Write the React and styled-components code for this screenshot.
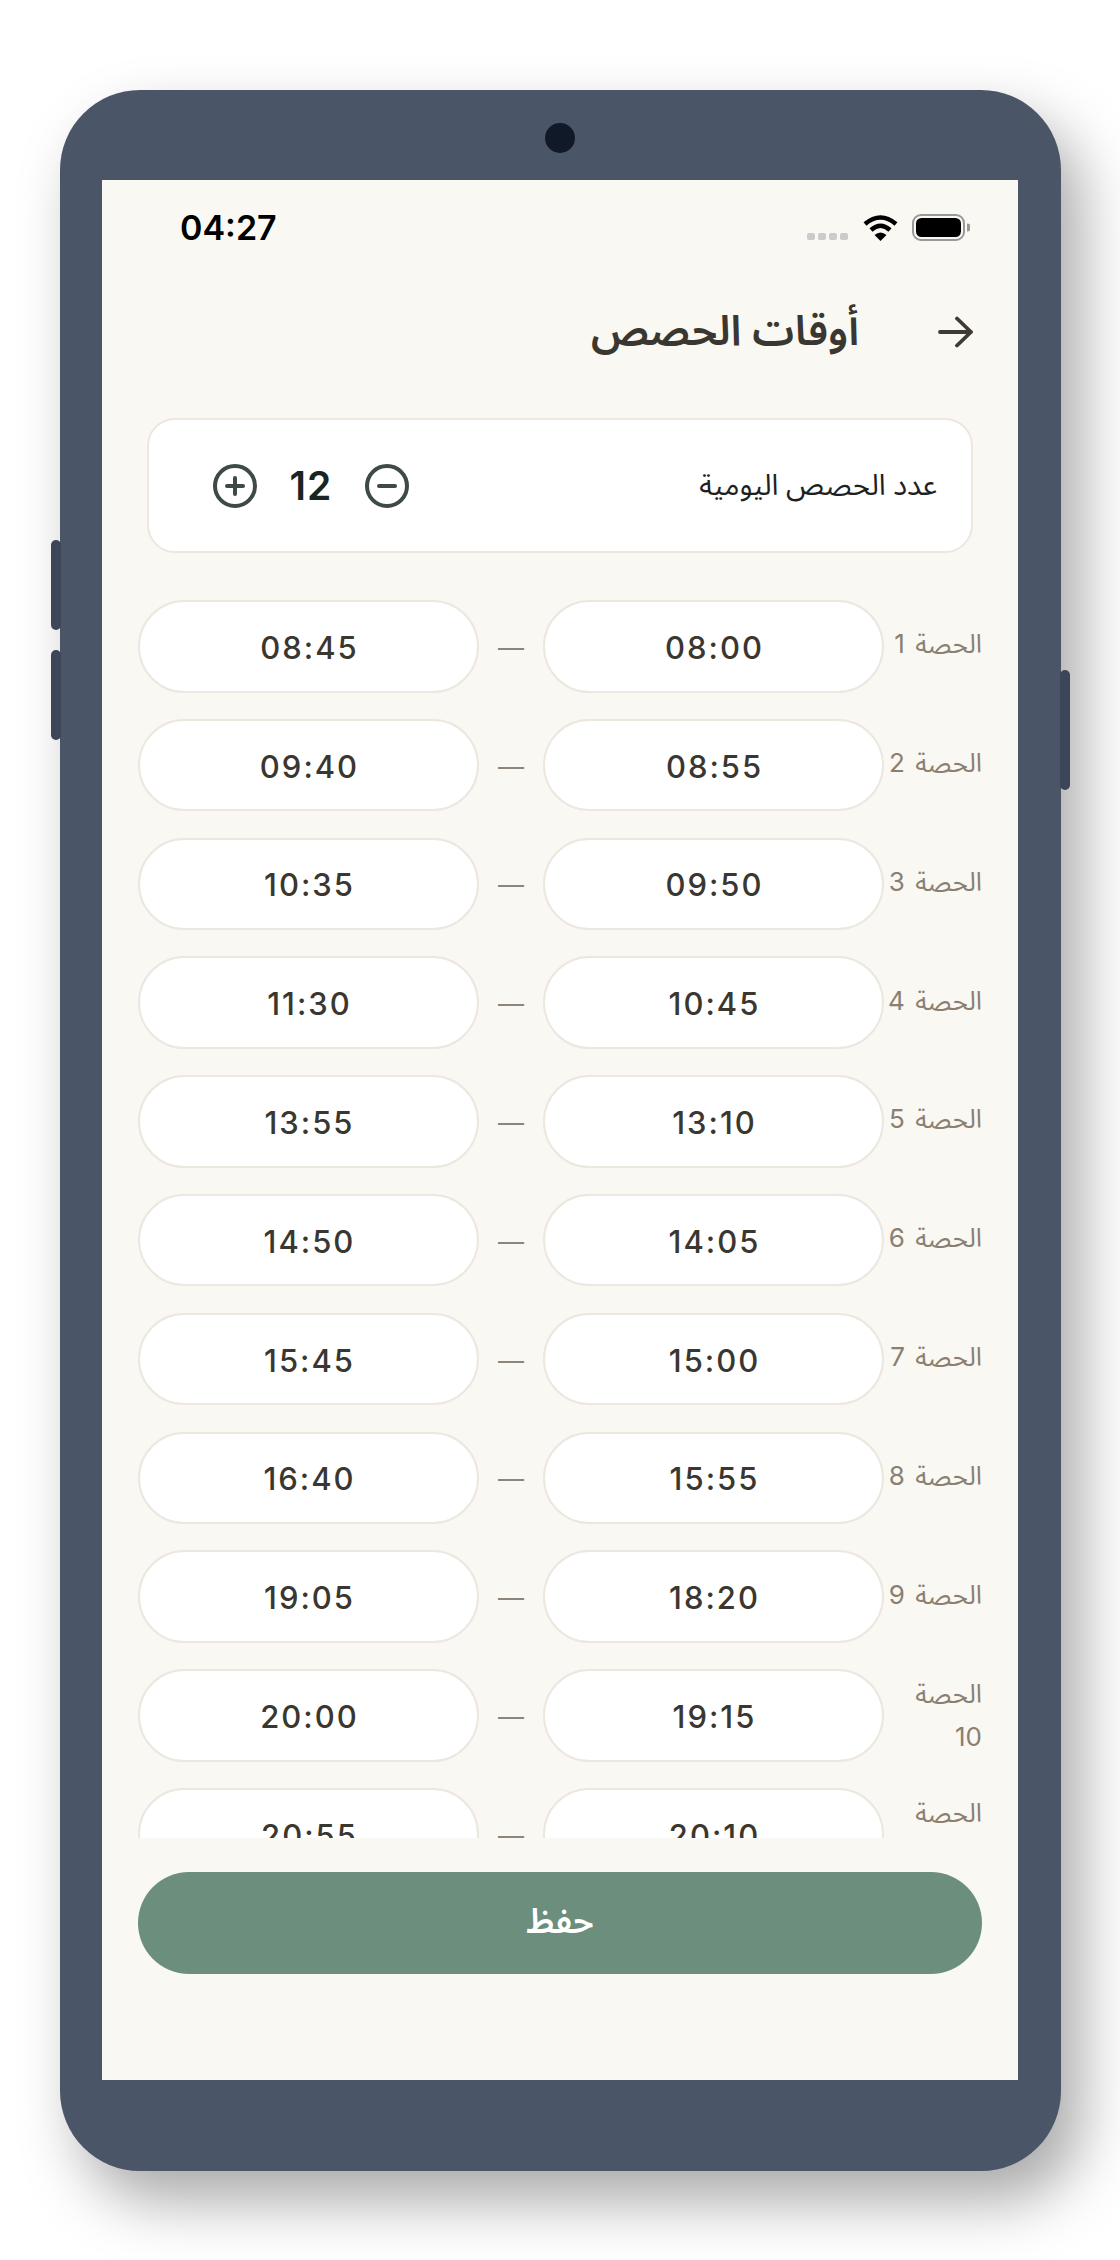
import React from "react";
import styled, { createGlobalStyle } from "styled-components";

const Global = createGlobalStyle`
  html, body { margin: 0; padding: 0; background: #fff; }
  body { font-family: Inter, "Noto Sans Arabic", "Noto Sans", sans-serif; }
`;
const Page = styled.div`
  width: 1120px; height: 2260px; box-sizing: border-box; padding: 90px 59px 0 60px; overflow: hidden;
`;
const Phone = styled.div`
  position: relative; width: 1001px; height: 2081px; box-sizing: border-box; padding: 90px 43px 91px 42px;
  background: #4a5568; border-radius: 80px; box-shadow: 20px 30px 60px rgba(0,0,0,.34);
`;
const Camera = styled.div`
  position: absolute; top: 33px; left: 485px; width: 30px; height: 30px; border-radius: 50%; background: #111827;
`;
const SideKey = styled.div`
  position: absolute; width: 10px; top: ${p => p.$top}px; height: ${p => p.$h}px; border-radius: 5px; background: #3d4558;
  ${p => p.$right ? "right: -9px;" : "left: -9px;"}
`;
const Screen = styled.div`
  height: 1900px; background: #f9f8f3; display: flex; flex-direction: column; overflow: hidden;
`;
const StatusBar = styled.div`
  direction: ltr; height: 96px; flex: none; box-sizing: border-box; padding: 0 48px 2px 78px;
  display: flex; align-items: center; justify-content: space-between;
`;
const Clock = styled.div`
  font: 600 34px Inter, sans-serif; color: #000;
`;
const StatusIcons = styled.div`
  display: flex; align-items: flex-end; gap: 14px; height: 27px;
`;
const SignalDots = styled.div`
  display: flex; gap: 3px; margin: 0 1px 1px 0;
`;
const Dot = styled.span`
  width: 8px; height: 7px; border-radius: 2px; background: #cbcbcb;
`;
const Main = styled.div`
  direction: rtl; flex: 1; min-height: 0; display: flex; flex-direction: column; padding: 0 36px;
`;
const Header = styled.div`
  flex: none; height: 112px; display: flex; align-items: center; gap: 78px; padding-right: 9px;
`;
const Title = styled.h1`
  margin: 0; font: 600 42px/1.2 "Noto Sans Arabic", sans-serif; color: #3a3630;
`;
const Card = styled.div`
  flex: none; margin: 30px 9px 47px; height: 135px; box-sizing: border-box; padding: 0 34px 0 62px;
  background: #fff; border: 2px solid #ece7df; border-radius: 28px;
  display: flex; align-items: center; justify-content: space-between;
`;
const CardLabel = styled.div`
  font: 400 29px/1.3 "Noto Sans Arabic", sans-serif; color: #1f1f1f;
`;
const Stepper = styled.div`
  display: flex; align-items: center; gap: 16px;
`;
const StepButton = styled.button`
  width: 48px; height: 48px; padding: 0; border: 0; background: none; color: #3d4a45; display: flex;
`;
const Count = styled.div`
  width: 72px; text-align: center; font: 600 39px/46px Inter, sans-serif; letter-spacing: 1px; color: #1a2421;
`;
const List = styled.div`
  flex: 1; min-height: 0; overflow: hidden; display: flex; flex-direction: column; gap: 26.3px;
`;
const Row = styled.div`
  flex: none; display: grid; grid-template-columns: 98px 341px 64px 341px; align-items: center; height: 92.5px;
`;
const RowLabel = styled.div`
  font: 400 26px/43px Inter, "Noto Sans Arabic", sans-serif; word-spacing: 3px; color: #8a7f72; width: 95px;
  margin-bottom: ${p => (p.$single ? 5 : 0)}px;
`;
const Pill = styled.div`
  height: 92.5px; box-sizing: border-box; padding: 2px 0 0 2px; border: 2px solid #ece7df; border-radius: 47px; background: #fff;
  display: flex; align-items: center; justify-content: center; direction: ltr;
  font: 500 31px Inter, sans-serif; letter-spacing: 2px; color: #3a3630;
`;
const Dash = styled.div`
  padding-top: 2px; text-align: center; font: 400 26px Inter, sans-serif; color: #8c857a;
`;
const Footer = styled.div`
  flex: none; padding: 34px 0 106px;
`;
const SaveButton = styled.button`
  display: block; width: 100%; height: 102px; padding-bottom: 2px; border: 0; border-radius: 51px; background: #6b8e7d;
  color: #fff; font: 600 34px/1.2 "Noto Sans Arabic", sans-serif;
`;

const rows = [
  ["08:00","08:45"],["08:55","09:40"],["09:50","10:35"],["10:45","11:30"],
  ["13:10","13:55"],["14:05","14:50"],["15:00","15:45"],["15:55","16:40"],
  ["18:20","19:05"],["19:15","20:00"],["20:10","20:55"],["21:05","21:50"],
];

const CircleIcon = ({ plus }) => (
  <svg width="48" height="48" viewBox="0 0 24 24" fill="none" stroke="currentColor" strokeWidth="2" strokeLinecap="round">
    <circle cx="12" cy="12" r="10" />
    <path d="M8 12h8" />
    {plus && <path d="M12 8v8" />}
  </svg>
);

export default function App() {
  return (
    <Page>
      <Global />
      <Phone>
        <Camera />
        <SideKey $top={450} $h={90} />
        <SideKey $top={560} $h={90} />
        <SideKey $right $top={580} $h={120} />
        <Screen>
          <StatusBar>
            <Clock>04:27</Clock>
            <StatusIcons>
              <SignalDots><Dot /><Dot /><Dot /><Dot /></SignalDots>
              <svg width="35" height="26" viewBox="0 0 35 26">
                <path d="M2 9Q17.5-4 33 9" fill="none" stroke="#000" strokeWidth="4.5" />
                <path d="M8 15Q17.5 6.500 27 15" fill="none" stroke="#000" strokeWidth="4.5" />
                <path d="M11.500 20Q17.500 15 23.500 20L17.500 26Z" fill="#000" />
              </svg>
              <svg width="58" height="27" viewBox="0 0 58 27">
                <rect x="1" y="1" width="51" height="25" rx="8" fill="none" stroke="#999" strokeWidth="2" />
                <rect x="4" y="4" width="45" height="19" rx="5.500" fill="#000" />
                <path d="M55 9.500a4 4 0 0 1 0 8Z" fill="#999" />
              </svg>
            </StatusIcons>
          </StatusBar>
          <Main>
            <Header>
              <svg width="36" height="34" viewBox="0 0 36 34" fill="none" stroke="#3f3a35" strokeWidth="3.8" strokeLinecap="round" strokeLinejoin="round">
                <path d="M34 17H3M34 17L20 3.500M34 17L20 30.500" />
              </svg>
              <Title>أوقات الحصص</Title>
            </Header>
            <Card>
              <CardLabel>عدد الحصص اليومية</CardLabel>
              <Stepper>
                <StepButton><CircleIcon /></StepButton>
                <Count>12</Count>
                <StepButton><CircleIcon plus /></StepButton>
              </Stepper>
            </Card>
            <List>
              {rows.map(([a, b], i) => (
                <Row key={i}>
                  <RowLabel $single={i < 9}>الحصة {i + 1}</RowLabel>
                  <Pill>{a}</Pill>
                  <Dash>—</Dash>
                  <Pill>{b}</Pill>
                </Row>
              ))}
            </List>
            <Footer><SaveButton>حفظ</SaveButton></Footer>
          </Main>
        </Screen>
      </Phone>
    </Page>
  );
}
